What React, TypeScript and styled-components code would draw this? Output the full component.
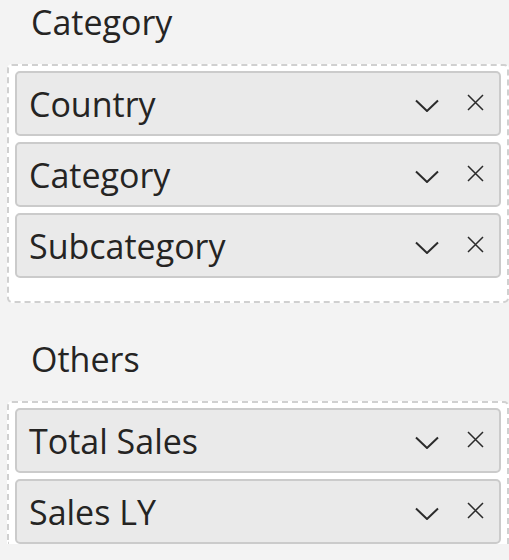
import React from 'react';
import styled, {createGlobalStyle} from "styled-components";

const GlobalStyle = createGlobalStyle`
  body {
    margin: 0;
    background: #f3f3f3;
    font-family: "Open Sans", "Noto Sans", sans-serif;
    color: #252423;
  }
`

type Group = { title: string, fields: string[], open?: boolean }

const groups: Group[] = [
    {title: "Category", fields: ["Country", "Category", "Subcategory"]},
    {title: "Others", fields: ["Total Sales", "Sales LY"], open: true},
]

const Chevron = () => (
    <svg width="24" height="13" viewBox="0 0 24 13" fill="none">
        <path d="M1 1.5 L12 12 L23 1.5" stroke="#2b2b2b" strokeWidth="2"/>
    </svg>
)

const Cross = () => (
    <svg width="17" height="17" viewBox="0 0 17 17" fill="none">
        <path d="M1 1 L16 16 M16 1 L1 16" stroke="#2b2b2b" strokeWidth="1.5"/>
    </svg>
)

const App = () => {
    return (
        <Page>
            <GlobalStyle/>
            {groups.map((g, i) =>
                <Section key={g.title} $first={i === 0}>
                    <Title>{g.title}</Title>
                    <DropZone $open={g.open}>
                        {g.fields.map(f =>
                            <Field key={f}>
                                <FieldName>{f}</FieldName>
                                <ChevronSlot><Chevron/></ChevronSlot>
                                <CrossSlot><Cross/></CrossSlot>
                            </Field>
                        )}
                    </DropZone>
                </Section>
            )}
        </Page>
    );
};

export default App;

const Page = styled.div`
  width: 509px;
  height: 560px;
  overflow: hidden;
`

const Section = styled.div<{ $first: boolean }>`
  margin-top: ${p => p.$first ? 0 : 34}px;
`

const Title = styled.div`
  height: 44px;
  line-height: 44px;
  font-size: 34px;
  padding-left: 31px;
  margin-bottom: 20px;
`

const DropZone = styled.div<{ $open?: boolean }>`
  display: flex;
  flex-direction: column;
  gap: 6px;
  margin-left: 7px;
  padding: 5px 6px ${p => p.$open ? 0 : 23}px 6px;
  background: #ffffff;
  border: 2px dashed #d0d0d0;
  border-bottom: ${p => p.$open ? "none" : "2px dashed #d0d0d0"};
  border-radius: ${p => p.$open ? "5px 5px 0 0" : "5px"};
`

const Field = styled.div`
  box-sizing: border-box;
  display: flex;
  align-items: center;
  height: 65px;
  padding: 0 15px 0 12px;
  background: #eaeaea;
  border: 2px solid #cbcbcb;
  border-radius: 5px;
`

const FieldName = styled.span`
  flex: 1;
  font-size: 34px;
  line-height: 44px;
  white-space: nowrap;
`

const ChevronSlot = styled.span`
  display: flex;
  margin-top: 3px;
  margin-right: 28px;
`

const CrossSlot = styled.span`
  display: flex;
  margin-top: -2px;
`
